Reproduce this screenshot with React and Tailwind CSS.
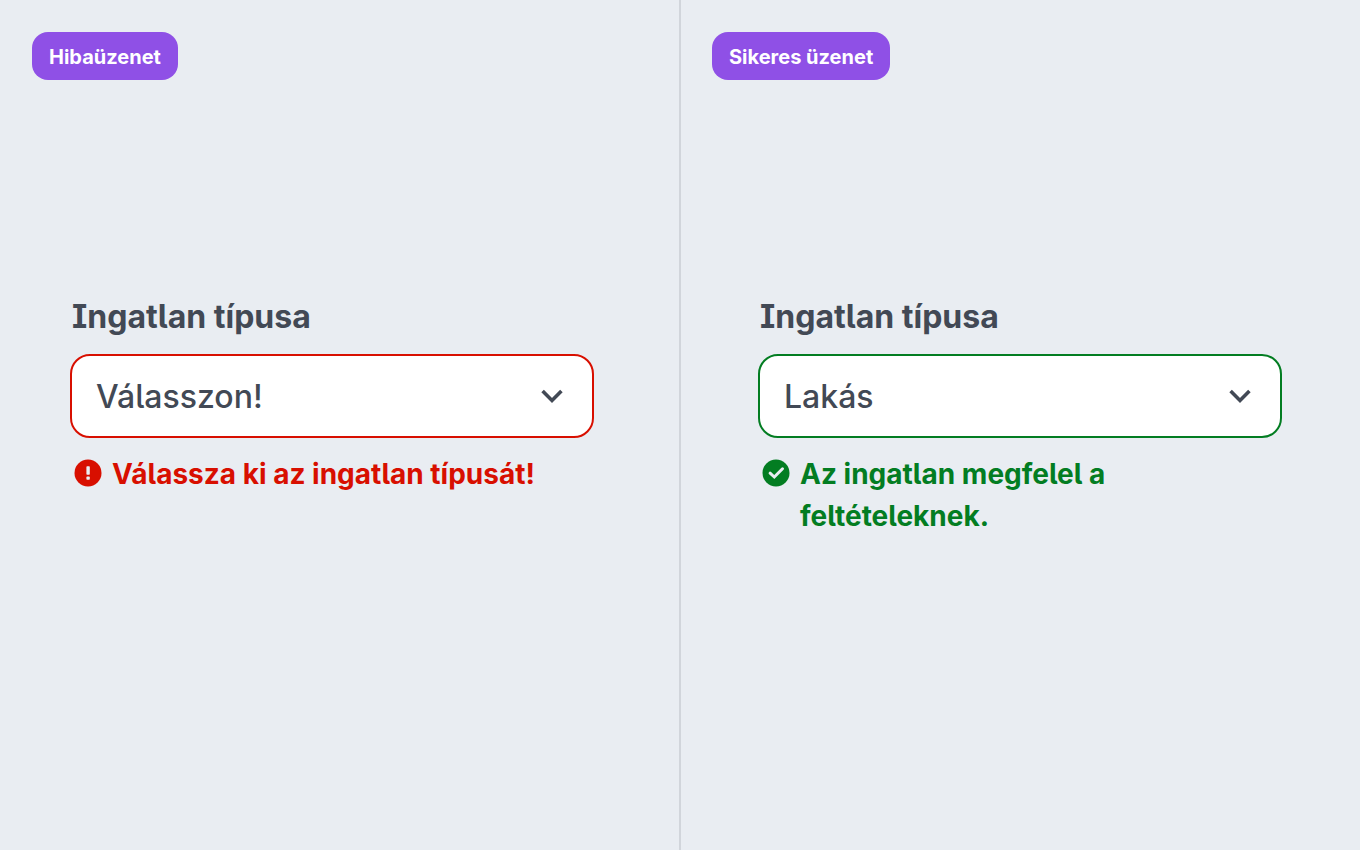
import React from 'react';

const ErrorIcon = () => (
    <svg viewBox="0 0 28 28" className="h-7 w-7 shrink-0" aria-hidden="true">
        <circle cx="14" cy="14" r="13.5" fill="currentColor" />
        <rect x="12.4" y="7.2" width="3.4" height="8.6" rx="0.8" fill="#e9edf2" />
        <rect x="12.4" y="17.6" width="3.4" height="3.2" rx="0.8" fill="#e9edf2" />
    </svg>
);

const SuccessIcon = () => (
    <svg viewBox="0 0 28 28" className="h-7 w-7 shrink-0" aria-hidden="true">
        <circle cx="14" cy="14" r="13.5" fill="currentColor" />
        <path
            d="M8.1 14.2l4.2 3.8 8.2-8.2"
            fill="none"
            stroke="#e9edf2"
            strokeWidth="3"
            strokeLinecap="round"
            strokeLinejoin="miter"
        />
    </svg>
);

const ChevronIcon = () => (
    <svg
        viewBox="0 0 24 24"
        className="pointer-events-none col-start-1 row-start-1 mr-[30px] h-6 w-6 self-center justify-self-end"
        aria-hidden="true"
    >
        <path d="M2.6 7L12 16.4 21.4 7" fill="none" stroke="#424955" strokeWidth="3.6" />
    </svg>
);

const Badge = ({ children }) => (
    <h2 className="flex h-12 w-fit items-center rounded-2xl bg-[#8f50e6] px-[17px] pt-0.5 text-[20px] font-bold text-white">
        {children}
    </h2>
);

const Field = ({ id, value, borderClass, messageClass, icon, message }) => (
    <div className="w-full max-w-[524px]">
        <label
            htmlFor={id}
            className="block pl-0.5 text-[32px] leading-[46px] font-bold"
        >
            Ingatlan típusa
        </label>
        <div className="mt-[14px] grid">
            <select
                id={id}
                defaultValue={value}
                aria-describedby={`${id}-message`}
                className={`col-start-1 row-start-1 h-[84px] w-full appearance-none rounded-[20px] border-2 bg-white pt-0.5 pr-16 pl-6 text-[32px] font-medium ${borderClass}`}
            >
                <option>{value}</option>
            </select>
            <ChevronIcon />
        </div>
        <p id={`${id}-message`} className={`mt-[15px] flex gap-[10px] pl-1 text-[28px] leading-[42px] font-bold ${messageClass}`}>
            <span className="flex h-10 items-center">{icon}</span>
            <span className="max-w-[440px]">{message}</span>
        </p>
    </div>
);

export default function App() {
    return (
        <main className="grid min-h-screen grid-cols-2 bg-[#e9edf2] font-['Inter',sans-serif] text-[#424955] [font-feature-settings:'cv05','cv08']">
            <section className="py-8 pl-8">
                <Badge>Hibaüzenet</Badge>
                <div className="mt-[214px] px-[38px]">
                    <Field
                        id="property-error"
                        value="Válasszon!"
                        borderClass="border-[#d80f00]"
                        messageClass="text-[#d80f00]"
                        icon={<ErrorIcon />}
                        message="Válassza ki az ingatlan típusát!"
                    />
                </div>
            </section>
            <section className="-ml-px border-l-2 border-[#d1d5db] py-8 pl-[31px]">
                <Badge>Sikeres üzenet</Badge>
                <div className="mt-[214px] px-[46px]">
                    <Field
                        id="property-success"
                        value="Lakás"
                        borderClass="border-[#037d22]"
                        messageClass="text-[#037d22]"
                        icon={<SuccessIcon />}
                        message="Az ingatlan megfelel a feltételeknek."
                    />
                </div>
            </section>
        </main>
    );
}
